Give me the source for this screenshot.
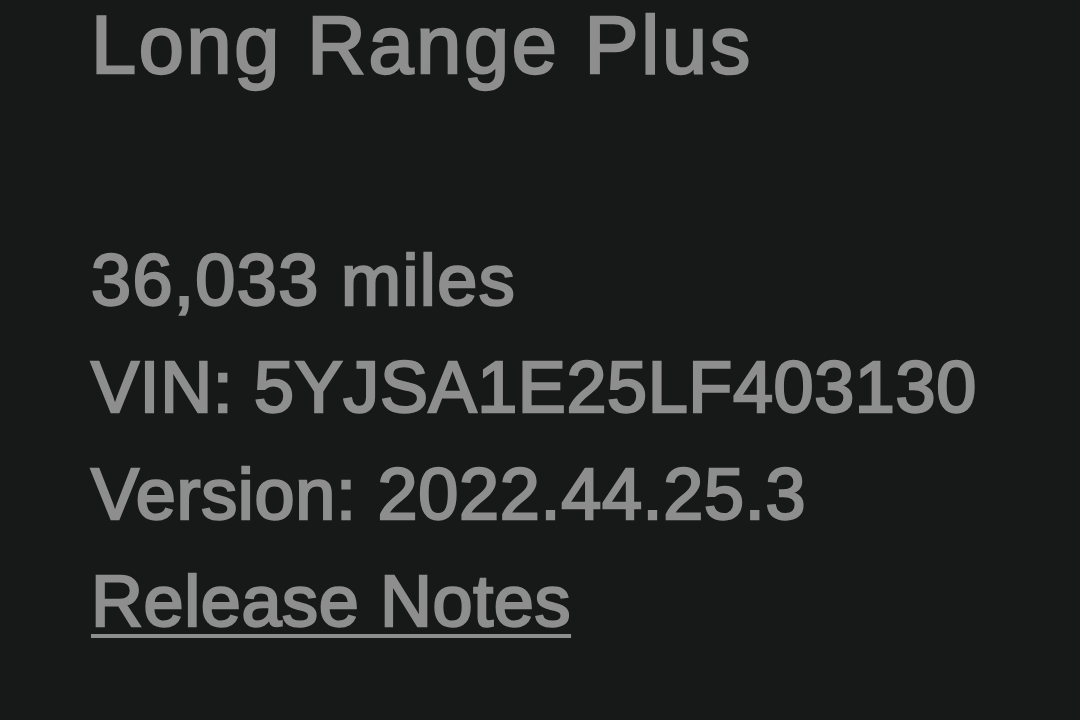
import React from "react";

const details = [
  { text: "36,033 miles", track: "tracking-[1.4px]" },
  { text: "VIN: 5YJSA1E25LF403130", track: "tracking-[0.6px]" },
  { text: "Version: 2022.44.25.3", track: "tracking-[0.7px]" },
];

const App = () => {
  return (
    <div
      className="w-[1080px] h-[720px] overflow-hidden bg-[#171818] pl-[91px] pt-[5px] text-[#8e8e8e] font-normal [-webkit-text-stroke:2.4px_#8e8e8e]"
      style={{ fontFamily: '"Liberation Sans", Arial, sans-serif' }}
    >
      <h1 className="text-[81px] leading-[81px] tracking-[2.7px]">Long Range Plus</h1>

      <div className="mt-[141px] text-[72px] leading-[107px]">
        {details.map((line) => (
          <p key={line.text} className={line.track}>
            {line.text}
          </p>
        ))}
        <a className="tracking-[0.6px] underline decoration-[4px] underline-offset-[8px]">Release Notes</a>
      </div>
    </div>
  );
};

export default App;
